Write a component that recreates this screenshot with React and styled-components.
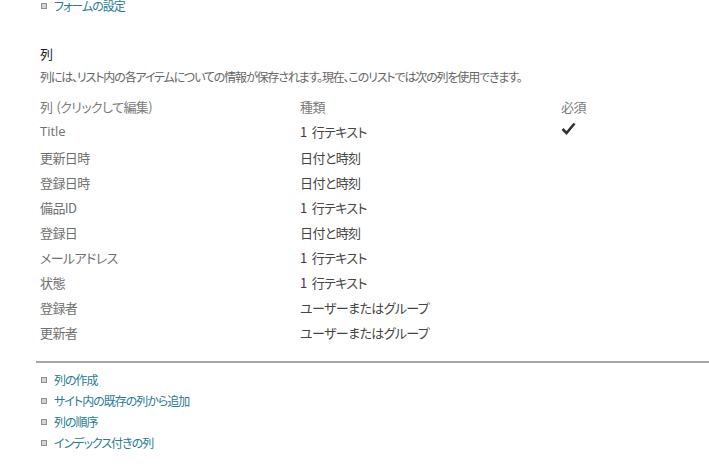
import React from "react";
import styled, { createGlobalStyle } from "styled-components";

const Global = createGlobalStyle`
  html, body { margin: 0; padding: 0; background: #fff; }
  body {
    font-family: "Noto Sans CJK JP", "Noto Sans", sans-serif;
    font-size: 13px;
    color: #444;
    font-feature-settings: "palt";
  }
`;

const Page = styled.div`
  width: 709px;
  height: 467px;
  overflow: hidden;
  display: flex;
  flex-direction: column;
`;

const LinkList = styled.ul`
  list-style: none;
  margin: ${(p) => p.$mt || "0"} 0 0 0;
  padding: 0 0 0 41px;
  display: flex;
  flex-direction: column;
`;

const LinkItem = styled.li`
  display: flex;
  align-items: center;
  gap: 7px;
  height: 21px;
  font-size: 12px;
  letter-spacing: -1px;
  color: #277b95;
`;

const Bullet = styled.span`
  width: 4px;
  height: 4px;
  border: 1px solid #8f8f8f;
  background: #d4d4d4;
  flex: none;
`;

const Section = styled.section`
  padding-left: 40px;
  margin-top: 28px;
  display: flex;
  flex-direction: column;
`;

const Heading = styled.h2`
  margin: 0;
  font-size: 13px;
  font-weight: normal;
  color: #1e1e1e;
  line-height: 20px;
`;

const Desc = styled.p`
  margin: 4px 0 0 0;
  font-size: 12px;
  color: #666;
  line-height: 18px;
  letter-spacing: -1.15px;
`;

const Table = styled.div`
  margin-top: 8px;
  display: grid;
  grid-template-columns: 260px 261px 1fr;
`;

const Cell = styled.div`
  height: ${(p) => (p.$head ? "24px" : p.$tall ? "27px" : "25px")};
  display: flex;
  align-items: ${(p) => (p.$tall ? "flex-start" : "center")};
  padding-top: ${(p) => (p.$tall ? "4px" : "0")};
  box-sizing: border-box;
  font-size: 13px;
  letter-spacing: ${(p) => (p.$latin ? "0" : "-0.6px")};
  color: ${(p) => (p.$head ? "#7a7a7a" : p.$name ? "#707070" : "#444")};
  font-family: ${(p) =>
    p.$latin
      ? '"Open Sans", "Noto Sans CJK JP", sans-serif'
      : '"Noto Sans CJK JP", sans-serif'};
`;

const HeadGap = styled.span`
  margin-right: 4px;
`;

const One = styled.span`
  color: #522a52;
  margin-right: 5px;
`;

const Divider = styled.hr`
  margin: 16px 0 0 36px;
  border: none;
  border-top: 2px solid #a6a6a6;
  height: 0;
`;

const Check = () => (
  <svg width="15" height="13" viewBox="0 0 15 13">
    <path d="M1.5 7 L5.5 11 L13.5 1.5" fill="none" stroke="#333" strokeWidth="2.6" strokeLinejoin="miter" />
  </svg>
);

const rows = [
  ["Title", "text", true, true],
  ["更新日時", "date"],
  ["登録日時", "date"],
  ["備品ID", "text"],
  ["登録日", "date"],
  ["メールアドレス", "text"],
  ["状態", "text"],
  ["登録者", "user"],
  ["更新者", "user"],
];

const typeLabel = (t) => {
  if (t === "text")
    return (
      <>
        <One>1</One>行テキスト
      </>
    );
  if (t === "date") return "日付と時刻";
  return "ユーザーまたはグループ";
};

export default function App() {
  return (
    <Page>
      <Global />
      <LinkList $mt="-5px">
        <LinkItem>
          <Bullet />
          フォームの設定
        </LinkItem>
      </LinkList>
      <Section>
        <Heading>列</Heading>
        <Desc>
          列には、リスト内の各アイテムについての情報が保存されます。現在、このリストでは次の列を使用できます。
        </Desc>
        <Table>
          <Cell $head>
            <HeadGap>列</HeadGap>(クリックして編集)
          </Cell>
          <Cell $head>種類</Cell>
          <Cell $head>必須</Cell>
          {rows.map(([name, type, req, latin]) => (
            <React.Fragment key={name}>
              <Cell $name $latin={latin} $tall={req}>{name}</Cell>
              <Cell $tall={req}>{typeLabel(type)}</Cell>
              <Cell $tall={req}>{req ? <Check /> : null}</Cell>
            </React.Fragment>
          ))}
        </Table>
      </Section>
      <Divider />
      <LinkList $mt="6px">
        {["列の作成", "サイト内の既存の列から追加", "列の順序", "インデックス付きの列"].map((t) => (
          <LinkItem key={t}>
            <Bullet />
            {t}
          </LinkItem>
        ))}
      </LinkList>
    </Page>
  );
}
